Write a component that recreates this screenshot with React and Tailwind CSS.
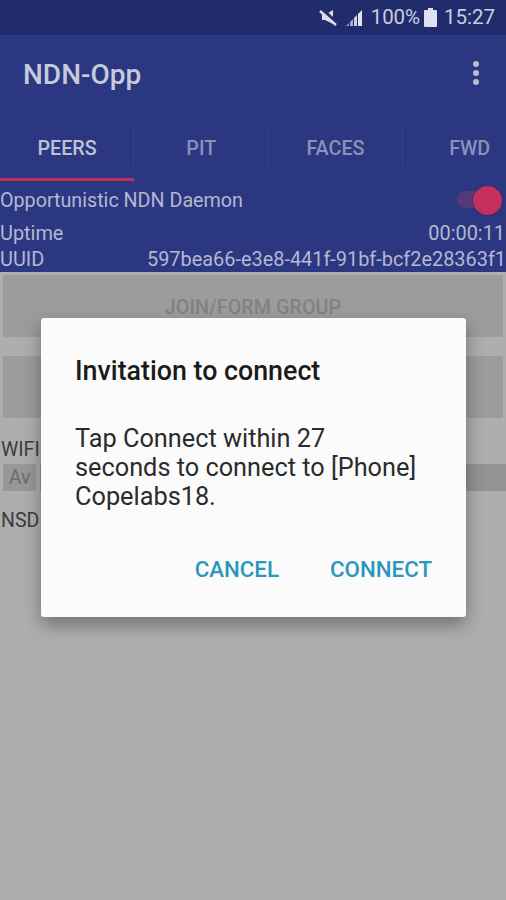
const ROBOTO = "font-['Roboto',sans-serif]";

function StatusBar() {
  return (
    <div className="flex h-[35px] items-center justify-end bg-[#212c6c] pr-[11px] text-[20.5px] text-[#c9cde0]">
      {/* muted speaker */}
      <svg width="19" height="17" viewBox="0 0 19 17" className="mr-[8px]">
        <path d="M3 6h3l8-5v14l-8-4H3z" fill="#dcdfea" />
        <path d="M2 0l16 14" stroke="#212c6c" strokeWidth="4" />
        <path d="M1 2l16 14" stroke="#dcdfea" strokeWidth="2.4" />
      </svg>
      {/* signal */}
      <svg width="18" height="18" viewBox="0 0 18 18" className="mr-[7px]">
        <path d="M0 17l3-3v3z" fill="#8f95bd" />
        <path d="M4 17v-4l3-3v7z" fill="#a3a9cb" />
        <path d="M8 17V9l3-3v11z" fill="#cfd2e2" />
        <path d="M12 17V5l4-4v16z" fill="#e0e2ec" />
      </svg>
      <span className="tracking-[-0.1px]">100%</span>
      <svg width="13" height="19" viewBox="0 0 13 19" className="ml-[4px] mr-[7px]">
        <path d="M4 0h5v2h3a1 1 0 0 1 1 1v15a1 1 0 0 1-1 1H1a1 1 0 0 1-1-1V3a1 1 0 0 1 1-1h3z" fill="#dfe1ec" />
      </svg>
      <span>15:27</span>
    </div>
  );
}

function Toolbar() {
  return (
    <div className="flex h-[85px] items-start justify-between bg-[#2c3781] pl-[23px] pr-[27px] pt-[22px]">
      <span className="text-[28px] font-medium leading-[36px] text-[#c6cadd]">NDN-Opp</span>
      <div className="mt-[4px] flex flex-col gap-[3px]">
        <span className="size-[6px] rounded-full bg-[#b9bcc6]" />
        <span className="size-[6px] rounded-full bg-[#b9bcc6]" />
        <span className="size-[6px] rounded-full bg-[#b9bcc6]" />
      </div>
    </div>
  );
}

function Tabs() {
  const tabs = ["PEERS", "PIT", "FACES", "FWD"];
  return (
    <div className="flex h-[61px] bg-[#2c3781]">
      {tabs.map((t, i) => (
        <div key={t} className="relative w-[134.2px] shrink-0">
          <div
            className={`flex h-[55px] items-start justify-center pt-[16px] text-[19.7px] font-medium leading-[25px] ${
              i === 0 ? "text-[#bfc3d6]" : "text-[#8b91b8]"
            }`}
          >
            {t}
          </div>
          {i < 3 && <span className="absolute right-0 top-[5px] h-[42px] w-px bg-[#36417f]" />}
          {i === 0 && <div className="absolute bottom-0 left-0 h-[3px] w-full bg-[#c23058]" />}
        </div>
      ))}
    </div>
  );
}

function Info() {
  return (
    <div className="h-[91px] bg-[#2c3781] text-[19.9px] text-[#b4b8d0]">
      <div className="flex h-[39px] items-center justify-between pl-0 pr-[4px]">
        <span className="text-[19.7px] leading-[38px]">Opportunistic NDN Daemon</span>
        <div className="relative h-[29px] w-[45px]">
          <span className="absolute left-0 top-[5px] h-[17px] w-[36px] rounded-full bg-[#55397a]" />
          <span className="absolute right-0 top-0 size-[29px] rounded-full bg-[#c42f5c] shadow-[0_0_2px_rgba(20,20,60,0.6)]" />
        </div>
      </div>
      <div className="flex h-[27px] items-center justify-between pl-0 pr-px leading-[27px]">
        <span>Uptime</span>
        <span>00:00:11</span>
      </div>
      <div className="flex h-[25px] items-center justify-between pl-0 leading-[25px]">
        <span>UUID</span>
        <span>597bea66-e3e8-441f-91bf-bcf2e28363f1</span>
      </div>
    </div>
  );
}

function Background() {
  return (
    <div className="flex-1 bg-[#aeaeae] text-[19.5px] text-[#3c3c3c]">
      <div className="px-[3px] pt-[3px]">
        <div className="flex h-[62px] items-center justify-center rounded-[2px] bg-[#9c9c9c] pt-[3px] text-[19.8px] font-medium text-[#828282]">
          JOIN/FORM GROUP
        </div>
        <div className="mt-[19px] h-[62px] rounded-[2px] bg-[#9c9c9c]" />
      </div>
      <div className="mt-[19px] px-px leading-[25px]">WIFI</div>
      <div className="mt-[2px] flex h-[27px] items-center">
        <div className="ml-[3px] flex h-full w-[33px] items-center justify-center bg-[#979797] text-[#6e6e6e]">
          Av
        </div>
        <div className="ml-[4px] h-full flex-1 bg-[#939393]" />
      </div>
      <div className="mt-[17px] px-px leading-[25px]">NSD</div>
    </div>
  );
}

function Dialog() {
  return (
    <div className="absolute left-[41px] top-[318px] h-[299px] w-[425px] rounded-[3px] bg-[#fbfbfb] shadow-[0_8px_18px_rgba(0,0,0,0.35)]">
      <div className="pl-[34px] pr-[30px] pt-[35px]">
        <div className="text-[26.8px] font-medium leading-[36px] text-[#1b1b1b]">Invitation to connect</div>
        <div className="mt-[35px] text-[25.3px] leading-[29px] text-[#2b2b2b]">
          Tap Connect within 27
          <br />
          seconds to connect to [Phone]
          <br />
          Copelabs18.
        </div>
      </div>
      <div className="mt-[43px] flex justify-end gap-[51px] pr-[34px] text-[22.3px] font-medium leading-[30px] text-[#2a97bd]">
        <span>CANCEL</span>
        <span>CONNECT</span>
      </div>
    </div>
  );
}

export default function App() {
  return (
    <div className={`relative flex h-[900px] w-[506px] flex-col overflow-hidden ${ROBOTO}`}>
      <StatusBar />
      <Toolbar />
      <Tabs />
      <Info />
      <Background />
      <Dialog />
    </div>
  );
}
